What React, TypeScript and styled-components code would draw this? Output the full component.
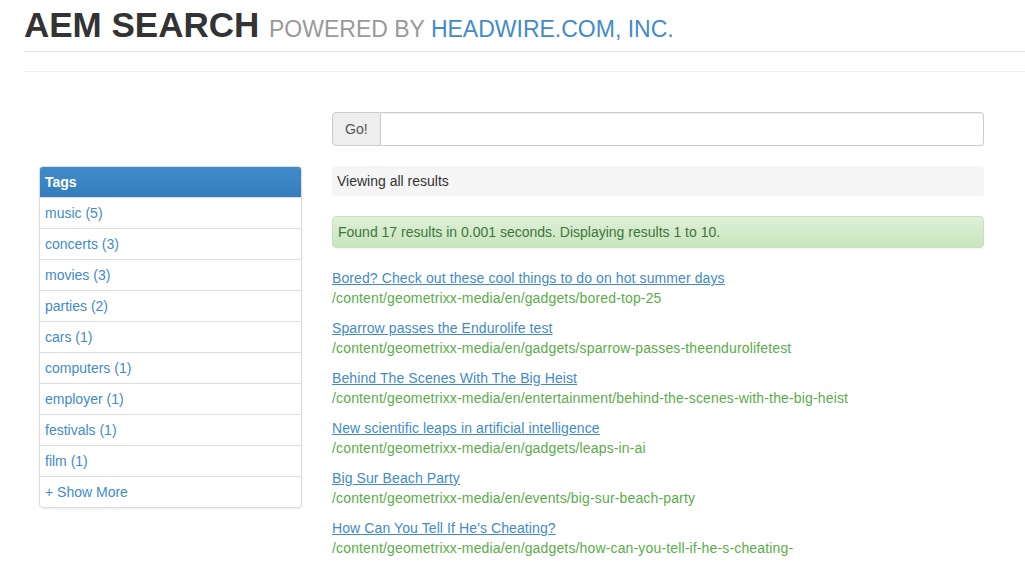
import React from 'react';
import styled, { createGlobalStyle } from 'styled-components';

const linkBlue = '#428bca';

const GlobalStyle = createGlobalStyle`
  body {
    margin: 0;
    background: #fff;
    font-family: "Liberation Sans", Arial, sans-serif;
    font-size: 14px;
    line-height: 20px;
    color: #333;
  }
`;

const Page = styled.div`
  padding-left: 24px;
  overflow: hidden;
`;

const PageHeader = styled.header`
  padding: 5px 0 6px;
  border-bottom: 1px solid #e5e5e5;
`;

const Title = styled.h1`
  margin: 0;
  height: 40px;
  font-size: 35px;
  line-height: 40px;
  font-weight: 700;
  color: #333;
  white-space: nowrap;
`;

const Subtitle = styled.small`
  font-size: 23px;
  line-height: 1;
  font-weight: 400;
  color: #999;
`;

const HeaderLink = styled.a`
  color: ${linkBlue};
  text-decoration: none;
`;

const Rule = styled.hr`
  margin: 19px 0 0;
  border: 0;
  border-top: 1px solid #eee;
`;

const Row = styled.div`
  display: grid;
  grid-template-columns: 263px 652px;
  column-gap: 30px;
  margin: 40px 0 0 15px;
  align-items: start;
`;

const Sidebar = styled.aside`
  margin-top: 54px;
`;

const Panel = styled.div`
  border: 1px solid #ddd;
  border-radius: 4px;
  overflow: hidden;
  box-shadow: 0 1px 2px rgba(0, 0, 0, 0.08);
`;

const PanelHeading = styled.div`
  padding: 5px;
  margin: -1px -1px 0;
  border: 1px solid #357ebd;
  border-bottom: 0;
  border-radius: 4px 4px 0 0;
  background: linear-gradient(#428bca, #357ebd);
  color: #fff;
  font-weight: 700;
`;

const TagItem = styled.a`
  display: block;
  padding: 5px;
  border-top: 1px solid #ddd;
  color: ${linkBlue};
  text-decoration: none;
`;

const Main = styled.main`
  display: flex;
  flex-direction: column;
`;

const InputGroup = styled.div`
  display: flex;
  height: 34px;
  margin-bottom: 20px;
`;

const GoButton = styled.button`
  padding: 0 12px;
  border: 1px solid #ccc;
  border-radius: 4px 0 0 4px;
  background: #eee;
  font: inherit;
  color: #555;
`;

const SearchInput = styled.input`
  flex: 1;
  border: 1px solid #ccc;
  border-left: 0;
  border-radius: 0 4px 4px 0;
  padding: 6px 12px;
  font: inherit;
  box-shadow: inset 0 1px 1px rgba(0, 0, 0, 0.075);
  outline: none;
`;

const Well = styled.div`
  padding: 5px;
  margin-bottom: 20px;
  background: #f5f5f5;
  border-radius: 4px;
  color: #333;
`;

const Alert = styled.div`
  padding: 5px;
  margin-bottom: 20px;
  border: 1px solid #c4e3b6;
  border-radius: 4px;
  background: linear-gradient(#dff0d8, #c8e5bc);
  color: #3c763d;
  box-shadow: 0 1px 2px rgba(0, 0, 0, 0.05);
`;

const Result = styled.div`
  margin-bottom: 10px;
`;

const ResultTitle = styled.a`
  display: block;
  width: fit-content;
  color: ${linkBlue};
  text-decoration: underline;
  letter-spacing: 0.1px;
`;

const ResultPath = styled.div`
  color: #5aad4a;
  letter-spacing: 0.15px;
`;

const tags = [
  'music (5)',
  'concerts (3)',
  'movies (3)',
  'parties (2)',
  'cars (1)',
  'computers (1)',
  'employer (1)',
  'festivals (1)',
  'film (1)',
  '+ Show More',
];

const results = [
  {
    title: 'Bored? Check out these cool things to do on hot summer days',
    path: '/content/geometrixx-media/en/gadgets/bored-top-25',
  },
  {
    title: 'Sparrow passes the Endurolife test',
    path: '/content/geometrixx-media/en/gadgets/sparrow-passes-theendurolifetest',
  },
  {
    title: 'Behind The Scenes With The Big Heist',
    path: '/content/geometrixx-media/en/entertainment/behind-the-scenes-with-the-big-heist',
  },
  {
    title: 'New scientific leaps in artificial intelligence',
    path: '/content/geometrixx-media/en/gadgets/leaps-in-ai',
  },
  {
    title: 'Big Sur Beach Party',
    path: '/content/geometrixx-media/en/events/big-sur-beach-party',
  },
  {
    title: "How Can You Tell If He's Cheating?",
    path: '/content/geometrixx-media/en/gadgets/how-can-you-tell-if-he-s-cheating-',
  },
];

const App = () => {
  return (
    <Page>
      <GlobalStyle />
      <PageHeader>
        <Title>
          AEM SEARCH{' '}
          <Subtitle>
            POWERED BY <HeaderLink href="#">HEADWIRE.COM, INC.</HeaderLink>
          </Subtitle>
        </Title>
      </PageHeader>
      <Rule />
      <Row>
        <Sidebar>
          <Panel>
            <PanelHeading>Tags</PanelHeading>
            {tags.map((tag) => (
              <TagItem key={tag} href="#">
                {tag}
              </TagItem>
            ))}
          </Panel>
        </Sidebar>
        <Main>
          <InputGroup>
            <GoButton>Go!</GoButton>
            <SearchInput type="text" />
          </InputGroup>
          <Well>Viewing all results</Well>
          <Alert>Found 17 results in 0.001 seconds. Displaying results 1 to 10.</Alert>
          {results.map((r) => (
            <Result key={r.path}>
              <ResultTitle href="#">{r.title}</ResultTitle>
              <ResultPath>{r.path}</ResultPath>
            </Result>
          ))}
        </Main>
      </Row>
    </Page>
  );
};

export default App;
